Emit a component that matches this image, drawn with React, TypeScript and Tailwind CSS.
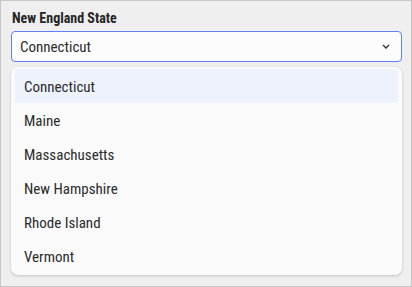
import React from "react";

const states = ["Connecticut", "Maine", "Massachusetts", "New Hampshire", "Rhode Island", "Vermont"];

export default function App() {
  return (
    <div
      className="w-[412px] h-[287px] bg-[#efefef] border border-[#c6c6c6] relative"
      style={{ fontFamily: "'Roboto Condensed', 'Open Sans', sans-serif" }}
    >
      <div className="pl-[10px] pt-[6px] pr-[9px]">
        <div className="text-[14px] font-bold text-[#262626] leading-[20px] pl-[1px] pt-[1px]">New England State</div>
        <div className="mt-[3px] h-[31px] rounded-[4px] border border-[#5f80f5] bg-[#fcfcfc] flex items-center justify-between pl-[8px] pr-[11px]">
          <span className="text-[15px] text-[#2b2b2b] pt-[1px]">Connecticut</span>
          <svg width="8" height="5" viewBox="0 0 8 5" fill="none">
            <path d="M1 1l3 3 3-3" stroke="#333" strokeWidth="1.4" />
          </svg>
        </div>
      </div>
      <div className="absolute left-[10px] top-[66px] w-[391px] h-[208px] rounded-[7px] bg-[#fafafa] shadow-[0_1px_3px_rgba(0,0,0,0.2)] py-[2px] px-[4px]">
        {states.map((s, i) => (
          <div
            key={s}
            className={
              "h-[34px] flex items-center pl-[9px] pt-[2px] text-[15px] text-[#2b2b2b] rounded-[3px] " +
              (i === 0 ? "bg-[#eef2fc]" : "")
            }
          >
            {s}
          </div>
        ))}
      </div>
    </div>
  );
}
